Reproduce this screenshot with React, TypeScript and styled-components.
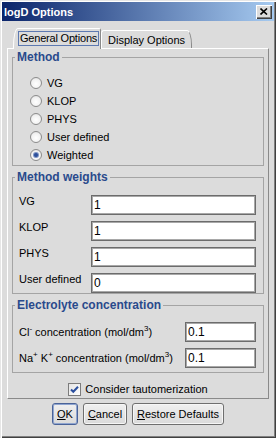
import React from 'react'
import styled, { createGlobalStyle } from 'styled-components'

const GlobalStyle = createGlobalStyle`
  html, body {
    margin:0;
    padding:0;
    background:#dcdcdc;
  }
  body {
    font-family:"Liberation Sans", Arial, sans-serif;
    font-size:11px;
    color:#000;
  }
`;

const Window = styled.div`
  width:276px;
  height:438px;
  box-sizing:border-box;
  padding:2px;
  background:#dcdcdc;
  box-shadow:inset 1px 1px 0 #e6e6e6, inset 2px 2px 0 #fff,
    inset -1px -1px 0 #404040, inset -2px -2px 0 #808080;
  display:flex;
  flex-direction:column;
`;

const TitleBar = styled.div`
  height:19px;
  display:flex;
  align-items:center;
  justify-content:space-between;
  padding:0 2px 0 2px;
  background:linear-gradient(to right, #0a246a, #a6caf0);
`;

const Title = styled.span`
  color:#fff;
  font-weight:bold;
  font-size:11px;
`;

const CloseBtn = styled.div`
  width:16px;
  height:14px;
  box-sizing:border-box;
  background:#dcdcdc;
  display:flex;
  align-items:center;
  justify-content:center;
  box-shadow:inset 1px 1px 0 #fff, inset -1px -1px 0 #404040, inset -2px -2px 0 #808080;
`;

const Body = styled.div`
  padding:0 5px;
  margin-top:7px;
`;

const TabRow = styled.div`
  display:flex;
  align-items:flex-end;
  height:20px;
  padding-left:6px;
  position:relative;
  z-index:1;
`;

const Tab = styled.div<{ $active?: boolean }>`
  box-sizing:border-box;
  width:${p => (p.$active ? 88 : 91)}px;
  height:${p => (p.$active ? 21 : 18)}px;
  margin-bottom:${p => (p.$active ? -1 : 0)}px;
  background:#dcdcdc;
  border:1px solid;
  border-bottom:none;
  border-color:#fff #8a8a8a transparent #fff;
  border-radius:${p => (p.$active ? '5px 2px 0 0 / 18px 2px 0 0' : '3px 5px 0 0 / 3px 15px 0 0')};
  display:flex;
  align-items:center;
  white-space:nowrap;
  padding-left:${p => (p.$active ? 4 : 6)}px;
  padding-bottom:${p => (p.$active ? 1 : 0)}px;
`;

const FocusLabel = styled.span`
  border:1px solid #5d79b1;
  padding:0 1px;
  line-height:13px;
  white-space:nowrap;
  letter-spacing:-0.2px;
`;

const Panel = styled.div`
  height:351px;
  box-sizing:border-box;
  border:1px solid;
  border-color:#fff #8a8a8a #8a8a8a #fff;
  padding:1px 4px 3px 4px;
  display:flex;
  flex-direction:column;
  gap:4px;
`;

const Group = styled.fieldset`
  margin:0;
  padding:0;
  min-width:0;
  border:1px solid #a4a4a4;
`;

const Legend = styled.legend`
  margin-left:2px;
  padding:0 2px;
  font-weight:bold;
  font-size:12px;
  line-height:14px;
  color:#2a4a8c;
`;

const RadioList = styled.div`
  padding:10px 0 1px 17px;
`;

const RadioRow = styled.label`
  height:18px;
  display:flex;
  align-items:center;
  gap:5px;
`;

const RadioDot = styled.span<{ $checked?: boolean }>`
  width:12px;
  height:12px;
  box-sizing:border-box;
  border-radius:50%;
  border:1px solid #8c8c8c;
  background:radial-gradient(circle at 50% 60%, #fff 0%, #f2f2f2 55%, #d6d6d6 100%);
  display:flex;
  align-items:center;
  justify-content:center;
  &::after {
    content:'';
    display:${p => (p.$checked ? 'block' : 'none')};
    width:4px;
    height:4px;
    border-radius:50%;
    background:#2c4f9a;
    box-shadow:0 0 0 1px #7d94c4;
  }
`;

const FieldGrid = styled.div<{ $cols: string; $pad: string }>`
  display:grid;
  grid-template-columns:${p => p.$cols};
  row-gap:6px;
  align-items:${p => (p.$cols.startsWith('1fr') ? 'center' : 'start')};
  padding:${p => p.$pad};
`;

const Label = styled.span`
  line-height:13px;
  white-space:nowrap;
  sup {
    font-size:8px;
    line-height:0;
    vertical-align:5px;
  }
`;

const Field = styled.input`
  box-sizing:border-box;
  height:20px;
  width:100%;
  margin:0;
  padding:0 2px;
  border:1px solid #6c6c6c;
  box-shadow:inset 0 0 0 1px #a8a8a8;
  background:#fff;
  font-family:"Liberation Sans", Arial, sans-serif;
  font-size:12px;
  color:#000;
  outline:none;
`;

const CheckRow = styled.label`
  margin-top:6px;
  display:flex;
  align-items:center;
  justify-content:center;
  gap:4px;
  line-height:13px;
`;

const CheckBox = styled.span`
  width:13px;
  height:13px;
  box-sizing:border-box;
  border:1px solid #7c7c7c;
  background:linear-gradient(135deg, #e4e4e4, #fff);
  display:flex;
  align-items:center;
  justify-content:center;
`;

const ButtonRow = styled.div`
  margin-top:4px;
  display:flex;
  justify-content:center;
  gap:5px;
`;

const Button = styled.button<{ $focus?: boolean; $w: number }>`
  width:${p => p.$w}px;
  height:22px;
  margin:0;
  padding:0;
  box-sizing:border-box;
  border:1px solid ${p => (p.$focus ? '#4a6398' : '#6f6f6f')};
  border-radius:3px;
  background:linear-gradient(#f0f0f0, #dadada);
  box-shadow:${p => (p.$focus ? 'inset 0 0 0 1px #8fa5d0' : 'inset 0 0 0 1px #f6f6f6')};
  font-family:"Liberation Sans", Arial, sans-serif;
  font-size:11px;
  color:#000;
`;

const methods = ['VG', 'KLOP', 'PHYS', 'User defined', 'Weighted'];
const weights: [string, string][] = [['VG', '1'], ['KLOP', '1'], ['PHYS', '1'], ['User defined', '0']];

const App = () => {
  return (
    <Window>
      <GlobalStyle />
      <TitleBar>
        <Title>logD Options</Title>
        <CloseBtn>
          <svg width="8" height="7" viewBox="0 0 8 7">
            <path d="M0.5 0.5 L7 6.5 M7 0.5 L0.5 6.5" stroke="#000" strokeWidth="1.6" />
          </svg>
        </CloseBtn>
      </TitleBar>
      <Body>
        <TabRow>
          <Tab $active><FocusLabel>General Options</FocusLabel></Tab>
          <Tab>Display Options</Tab>
        </TabRow>
        <Panel>
          <Group>
            <Legend>Method</Legend>
            <RadioList>
              {methods.map(m => (
                <RadioRow key={m}>
                  <RadioDot $checked={m === 'Weighted'} />
                  {m}
                </RadioRow>
              ))}
            </RadioList>
          </Group>
          <Group>
            <Legend>Method weights</Legend>
            <FieldGrid $cols="72px 1fr" $pad="11px 7px 0 6px">
              {weights.map(([name, val]) => (
                <React.Fragment key={name}>
                  <Label>{name}</Label>
                  <Field value={val} readOnly />
                </React.Fragment>
              ))}
            </FieldGrid>
          </Group>
          <Group>
            <Legend>Electrolyte concentration</Legend>
            <FieldGrid $cols="1fr 71px" $pad="10px 7px 4px 6px">
              <Label>Cl<sup>-</sup> concentration (mol/dm<sup>3</sup>)</Label>
              <Field value="0.1" readOnly />
              <Label>Na<sup>+</sup> K<sup>+</sup> concentration (mol/dm<sup>3</sup>)</Label>
              <Field value="0.1" readOnly />
            </FieldGrid>
          </Group>
          <CheckRow>
            <CheckBox>
              <svg width="9" height="9" viewBox="0 0 9 9">
                <path d="M1 4.5 L3.3 6.8 L8 1.8" stroke="#2b4f9e" strokeWidth="2" fill="none" />
              </svg>
            </CheckBox>
            Consider tautomerization
          </CheckRow>
        </Panel>
        <ButtonRow>
          <Button $focus $w={26}><u>O</u>K</Button>
          <Button $w={44}><u>C</u>ancel</Button>
          <Button $w={92}><u>R</u>estore Defaults</Button>
        </ButtonRow>
      </Body>
    </Window>
  )
}

export default App
